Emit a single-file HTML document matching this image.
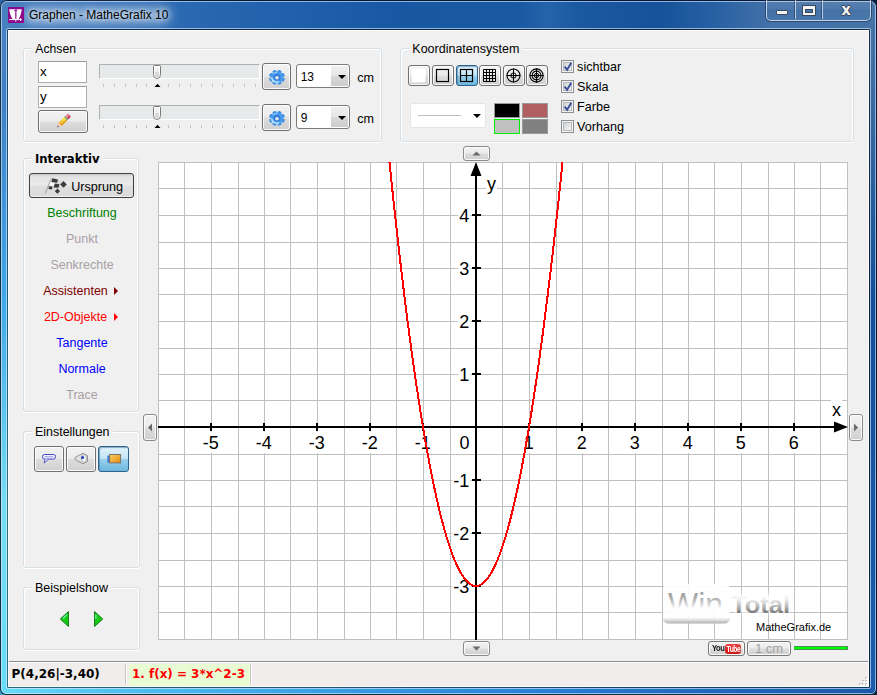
<!DOCTYPE html>
<html lang="de"><head><meta charset="utf-8"><title>Graphen - MatheGrafix 10</title>
<style>
*{box-sizing:border-box;margin:0;padding:0}
html,body{width:877px;height:695px;overflow:hidden}
body{position:relative;font-family:"Liberation Sans",sans-serif;font-size:12.5px;color:#000;background:linear-gradient(90deg,#2f64a8 0,#2f64a8 50%,#0a1a3a 50%,#0a1a3a 100%) 0 0/100% 50% no-repeat,linear-gradient(90deg,#3a9cc4 0,#3a9cc4 50%,#0c1c3c 50%,#0c1c3c 100%) 0 100%/100% 50% no-repeat}
.abs,.abs>*{position:absolute}
#frame{left:0;top:0;width:877px;height:695px;overflow:hidden;border-radius:7px 7px 6px 6px;
 background:
  linear-gradient(90deg,#68dcf8 0,#52c2f2 100px,#3aa2e6 300px,#2a86da 500px,#2068c0 700px,#1c58a8 100%) 0 687px/877px 8px no-repeat,
  linear-gradient(180deg,#4a80c0 0,#4080c8 100px,#40a8e8 300px,#74dcf2 500px,#68dcf8 695px) 0 0/8px 695px no-repeat,
  linear-gradient(180deg,#4875a8 0,#3a6aa0 100px,#124f98 300px,#1c5cac 695px) 869px 0/8px 695px no-repeat,
  linear-gradient(90deg,#4a80c0 0,#3f78bc 40px,#2b6ab2 180px,#2362ac 260px,#1858a2 400px,#1a5aa2 520px,#2563aa 548px,#1a589f 580px,#16529a 660px,#2a62a4 720px,#4371a8 770px,#4674a8 100%) 0 0/877px 30px no-repeat,
  #1f5eae;
 box-shadow:inset 1px 0 0 #123244,inset 0 -1px 0 #123244,inset 0 0 0 1px #06183a}
#frame:before{content:"";position:absolute;left:1px;top:1px;right:1px;bottom:1px;border-radius:6px 6px 5px 5px;border:1px solid rgba(220,235,250,.62)}
#frame:after{content:"";box-sizing:border-box;position:absolute;left:6px;top:28px;width:865px;height:661px;border-radius:2px;border:1px solid rgba(220,240,255,.62)}
#inb{left:7px;top:29px;width:863px;height:659px;border:1px solid rgba(8,26,52,.82);border-left-color:rgba(10,40,50,.62);border-bottom-color:rgba(10,40,50,.62);border-radius:1px}
#client{left:8px;top:30px;width:861px;height:657px;background:#f0f0f0;border:1px solid #fdfcfb}
#title{left:29px;top:6px;font-size:12px;line-height:18px;white-space:nowrap;color:#000;text-shadow:0 0 5px rgba(255,255,255,.8),0 0 9px rgba(255,255,255,.6)}
#glow{left:24px;top:7px;width:146px;height:17px;border-radius:8px;background:rgba(255,255,255,.45);filter:blur(6px)}
.gb{border:1px solid #d5dfe5;border-radius:3px;box-shadow:inset 1px 1px 0 #fff,inset -1px 0 0 #fff,0 1px 0 #fff}
.gl{background:#f0f0f0;padding:0 3px;white-space:nowrap;line-height:15px;height:15px}
.btn{border:1px solid #707070;border-radius:3px;background:linear-gradient(180deg,#f2f2f2 0,#ebebeb 48%,#dddddd 52%,#cfcfcf 100%);box-shadow:inset 0 0 0 1px rgba(255,255,255,.85)}
.btn.on{border-color:#2c628b;background:linear-gradient(180deg,#e2f2fb 0,#c2e4f6 48%,#98d0ee 52%,#6cb7dd 100%);box-shadow:inset 1px 1px 1px rgba(60,110,150,.55)}
.tb{border:1px solid #abadb3;border-top-color:#9a9c9f;background:#fff;padding-left:1px;line-height:19px;font-size:13.5px}
.trk{background:#e7eaea;border:1px solid #fff;border-top-color:#b0b0b0;border-left-color:#b0b0b0}
.tick{width:1px;height:3px;background:#c3c3c3}
.cb{width:13px;height:13px;border:1px solid #8e8f8f;background:#f4f4f4;box-shadow:inset 0 0 0 1px #f4f4f4,inset 0 0 0 2px #b5b9bd}
.cb i{position:absolute;left:2px;top:2px;width:7px;height:7px;background:linear-gradient(135deg,#d0d3d6,#f5f5f5)}
.lbl{white-space:nowrap;line-height:15px}
.li{left:20px;width:106px;text-align:center;line-height:16px;white-space:nowrap}
.combo{border:1px solid #7b7b7b;border-radius:3px;background:#fff;overflow:hidden;box-shadow:inset 0 0 0 1px #fff}
.combo .dd{right:1px;top:1px;bottom:1px;width:17px;background:linear-gradient(180deg,#f0f0f0 0,#e6e6e6 48%,#d8d8d8 52%,#cdcdcd 100%)}
.arr{width:0;height:0;border-left:4px solid transparent;border-right:4px solid transparent;border-top:4px solid #000}
.bold{font-family:"DejaVu Sans",sans-serif;font-weight:bold}
</style></head><body>
<div id="frame" class="abs">
<div id="glow"></div>
<svg style="left:8px;top:7px" width="16" height="16" viewBox="0 0 16 16"><rect width="16" height="16" fill="#8b0a8b"/><path d="M1.2 2.2H13.8C13.3 6 12.3 9.5 10.6 12H8.3V3.2H7.3V12H4.6C2.8 9.5 1.7 6 1.2 2.2Z" fill="#fff"/><path d="M6.4 3.2H9.2" stroke="#8b0a8b" stroke-width="1"/><path d="M7.8 2.6V14.6M1.2 12.6H13.8M12.6 11.2V14" stroke="#fff" stroke-width="1"/><path d="M7.8 2.6V11.6" stroke="#8b0a8b" stroke-width="1"/><path d="M6.6 3.4H9" stroke="#8b0a8b" stroke-width=".9"/></svg>
<div id="title">Graphen - MatheGrafix 10</div>
<div class="abs" style="left:766px;top:0;width:105px;height:21px;border:1px solid rgba(235,242,250,.75);border-top:0;border-radius:0 0 5px 5px;background:linear-gradient(180deg,rgba(255,255,255,.10),rgba(255,255,255,.05) 45%,rgba(255,255,255,0) 50%,rgba(255,255,255,.03));box-shadow:0 0 0 1px rgba(20,40,80,.55)">
<div style="left:28px;top:0;width:1px;height:19px;background:rgba(235,242,250,.7);box-shadow:-1px 0 0 rgba(20,40,80,.45)"></div>
<div style="left:55px;top:0;width:1px;height:19px;background:rgba(235,242,250,.7);box-shadow:-1px 0 0 rgba(20,40,80,.45)"></div>
<div style="left:9px;top:10px;width:12px;height:5px;background:#f4f4f4;border:1px solid #3a4a60;border-radius:1px"></div>
<div style="left:36px;top:6px;width:12px;height:9px;border:2px solid #f4f4f4;border-top-width:3px;outline:1px solid #3a4a60;box-shadow:inset 0 0 0 1px #3a4a60"></div>
<div style="left:66px;top:2px;width:26px;text-align:center;font:bold 15px/17px 'DejaVu Sans',sans-serif;color:#f4f4f4;text-shadow:0 0 1px #223,1px 0 0 #3a4a60,-1px 0 0 #3a4a60,0 1px 0 #3a4a60,0 -1px 0 #3a4a60">x</div>
</div>
<div id="inb"></div><div id="client" class="abs">
<div class="gb" style="left:14px;top:17px;width:359px;height:94px"></div><div class="gl" style="left:23.299999999999997px;top:11px;font-size:12.2px">Achsen</div>
<div class="gb" style="left:391px;top:17px;width:454px;height:94px"></div><div class="gl" style="left:400.3px;top:11px">Koordinatensystem</div>
<div class="gb" style="left:14px;top:127px;width:116px;height:254px"></div><div class="gl bold" style="left:23px;top:121px;font-size:11.65px">Interaktiv</div>
<div class="gb" style="left:14px;top:400px;width:117px;height:137px"></div><div class="gl" style="left:23.1px;top:394px;font-size:12.4px">Einstellungen</div>
<div class="gb" style="left:14px;top:556px;width:117px;height:63px"></div><div class="gl" style="left:23px;top:550px">Beispielshow</div>
<div class="tb" style="left:29px;top:30px;width:49px;height:22px">x</div><div class="tb" style="left:29px;top:55px;width:49px;height:22px">y</div><div class="btn" style="left:29px;top:79px;width:50px;height:23px"></div><svg style="left:46px;top:81px" width="18" height="18" viewBox="0 0 18 18"><defs><linearGradient id="pg" x1="0" y1="0" x2="1" y2="0"><stop offset="0" stop-color="#f8a828"/><stop offset="1" stop-color="#f4f040"/></linearGradient></defs><g transform="translate(2.2 15.2) rotate(-45)"><path d="M0 0L4.2 -2.2V2.2Z" fill="#f0c8a8"/><path d="M0 0L1.6 -0.9V0.9Z" fill="#503050"/><rect x="4.2" y="-2.2" width="7.6" height="4.4" fill="url(#pg)"/><rect x="4.2" y="0.8" width="7.6" height="1.4" fill="#e08818" opacity=".8"/><rect x="11.8" y="-2.2" width="1.8" height="4.4" fill="#88a070"/><path d="M13.6 -2.2H16.2Q17.6 -2.2 17.6 0Q17.6 2.2 16.2 2.2H13.6Z" fill="#e88898"/><path d="M13.6 0.6H17.4Q17.2 2.2 16.2 2.2H13.6Z" fill="#c83050"/></g></svg>
<div class="trk" style="left:90px;top:33px;width:161px;height:15px"></div><svg style="left:143px;top:33px" width="11" height="17" viewBox="0 0 11 17"><defs><linearGradient id="tg64" x1="0" y1="0" x2="0" y2="1"><stop offset="0" stop-color="#f6f6f6"/><stop offset=".5" stop-color="#ececec"/><stop offset=".55" stop-color="#dcdcdc"/><stop offset="1" stop-color="#cfcfcf"/></linearGradient></defs><path d="M1.5 2.5Q1.5 1.5 2.5 1.5H7.5Q8.5 1.5 8.5 2.5V10.5Q8.5 14.5 5 14.5Q1.5 14.5 1.5 10.5Z" fill="#fff" stroke="#7a7a7a" stroke-width="1"/><path d="M3 3H7V10.5Q7 13 5 13Q3 13 3 10.5Z" fill="url(#tg64)"/></svg><div class="tick" style="left:94px;top:53px"></div><div class="tick" style="left:105px;top:53px"></div><div class="tick" style="left:116px;top:53px"></div><div class="tick" style="left:127px;top:53px"></div><div class="tick" style="left:137px;top:53px"></div><svg style="left:145px;top:52px" width="8" height="5" viewBox="0 0 8 5"><path d="M0.5 4L3.5 0.8L6.5 4Z" fill="#000"/></svg><div class="tick" style="left:159px;top:53px"></div><div class="tick" style="left:170px;top:53px"></div><div class="tick" style="left:181px;top:53px"></div><div class="tick" style="left:192px;top:53px"></div><div class="tick" style="left:203px;top:53px"></div><div class="tick" style="left:213px;top:53px"></div><div class="tick" style="left:224px;top:53px"></div><div class="tick" style="left:235px;top:53px"></div><div class="tick" style="left:246px;top:53px"></div>
<div class="trk" style="left:90px;top:74px;width:161px;height:15px"></div><svg style="left:143px;top:74px" width="11" height="17" viewBox="0 0 11 17"><defs><linearGradient id="tg105" x1="0" y1="0" x2="0" y2="1"><stop offset="0" stop-color="#f6f6f6"/><stop offset=".5" stop-color="#ececec"/><stop offset=".55" stop-color="#dcdcdc"/><stop offset="1" stop-color="#cfcfcf"/></linearGradient></defs><path d="M1.5 2.5Q1.5 1.5 2.5 1.5H7.5Q8.5 1.5 8.5 2.5V10.5Q8.5 14.5 5 14.5Q1.5 14.5 1.5 10.5Z" fill="#fff" stroke="#7a7a7a" stroke-width="1"/><path d="M3 3H7V10.5Q7 13 5 13Q3 13 3 10.5Z" fill="url(#tg105)"/></svg><div class="tick" style="left:94px;top:94px"></div><div class="tick" style="left:105px;top:94px"></div><div class="tick" style="left:116px;top:94px"></div><div class="tick" style="left:127px;top:94px"></div><div class="tick" style="left:137px;top:94px"></div><svg style="left:145px;top:93px" width="8" height="5" viewBox="0 0 8 5"><path d="M0.5 4L3.5 0.8L6.5 4Z" fill="#000"/></svg><div class="tick" style="left:159px;top:94px"></div><div class="tick" style="left:170px;top:94px"></div><div class="tick" style="left:181px;top:94px"></div><div class="tick" style="left:192px;top:94px"></div><div class="tick" style="left:203px;top:94px"></div><div class="tick" style="left:213px;top:94px"></div><div class="tick" style="left:224px;top:94px"></div><div class="tick" style="left:235px;top:94px"></div><div class="tick" style="left:246px;top:94px"></div>
<div class="btn" style="left:253px;top:32px;width:29px;height:27px"></div><svg style="left:259px;top:38px" width="18" height="16" viewBox="-9 -8 18 16"><g transform="translate(0 .3) scale(1 .94)"><g fill="#3f90e4"><rect x="-2" y="-8" width="4" height="5" rx="1.1" transform="rotate(22.5)"/><rect x="-2" y="-8" width="4" height="5" rx="1.1" transform="rotate(67.5)"/><rect x="-2" y="-8" width="4" height="5" rx="1.1" transform="rotate(112.5)"/><rect x="-2" y="-8" width="4" height="5" rx="1.1" transform="rotate(157.5)"/><rect x="-2" y="-8" width="4" height="5" rx="1.1" transform="rotate(202.5)"/><rect x="-2" y="-8" width="4" height="5" rx="1.1" transform="rotate(247.5)"/><rect x="-2" y="-8" width="4" height="5" rx="1.1" transform="rotate(292.5)"/><rect x="-2" y="-8" width="4" height="5" rx="1.1" transform="rotate(337.5)"/></g><circle r="6" fill="#4a9cec"/><circle r="3.4" fill="#2f7cd8"/><path d="M-5.2 1.2A5.2 5.2 0 0 0 1.5 5" stroke="#b8e0ff" stroke-width="1.8" fill="none" stroke-linecap="round"/><path d="M-3.6 -3.8A5 5 0 0 1 0 -5.2" stroke="#8cc8fa" stroke-width="1.2" fill="none"/><circle cx="0" cy=".4" r="1.9" fill="#e2e6ea"/></g></svg><div class="combo abs" style="left:287px;top:33px;width:54px;height:24px"><div style="left:3.7px;top:4px;line-height:17px;font-size:12px">13</div><div class="dd"></div><div class="arr" style="left:41px;top:10px"></div></div><div class="lbl" style="left:348.3px;top:40px;font-size:12.6px">cm</div>
<div class="btn" style="left:253px;top:73px;width:29px;height:27px"></div><svg style="left:259px;top:79px" width="18" height="16" viewBox="-9 -8 18 16"><g transform="translate(0 .3) scale(1 .94)"><g fill="#3f90e4"><rect x="-2" y="-8" width="4" height="5" rx="1.1" transform="rotate(22.5)"/><rect x="-2" y="-8" width="4" height="5" rx="1.1" transform="rotate(67.5)"/><rect x="-2" y="-8" width="4" height="5" rx="1.1" transform="rotate(112.5)"/><rect x="-2" y="-8" width="4" height="5" rx="1.1" transform="rotate(157.5)"/><rect x="-2" y="-8" width="4" height="5" rx="1.1" transform="rotate(202.5)"/><rect x="-2" y="-8" width="4" height="5" rx="1.1" transform="rotate(247.5)"/><rect x="-2" y="-8" width="4" height="5" rx="1.1" transform="rotate(292.5)"/><rect x="-2" y="-8" width="4" height="5" rx="1.1" transform="rotate(337.5)"/></g><circle r="6" fill="#4a9cec"/><circle r="3.4" fill="#2f7cd8"/><path d="M-5.2 1.2A5.2 5.2 0 0 0 1.5 5" stroke="#b8e0ff" stroke-width="1.8" fill="none" stroke-linecap="round"/><path d="M-3.6 -3.8A5 5 0 0 1 0 -5.2" stroke="#8cc8fa" stroke-width="1.2" fill="none"/><circle cx="0" cy=".4" r="1.9" fill="#e2e6ea"/></g></svg><div class="combo abs" style="left:287px;top:74px;width:54px;height:24px"><div style="left:3.7px;top:4px;line-height:17px;font-size:12px">9</div><div class="dd"></div><div class="arr" style="left:41px;top:10px"></div></div><div class="lbl" style="left:348.3px;top:81px;font-size:12.6px">cm</div>
<div class="btn" style="left:399px;top:34px;width:22px;height:21px"></div><svg style="left:399px;top:34px" width="22" height="21" viewBox="0 0 22 21"><rect x="3.5" y="3.5" width="14" height="14" fill="#fff" stroke="none"/></svg><div class="btn" style="left:423px;top:34px;width:22px;height:21px"></div><svg style="left:423px;top:34px" width="22" height="21" viewBox="0 0 22 21"><rect x="4.5" y="4.5" width="12" height="12" fill="none" stroke="#000" stroke-width="1.15"/></svg><div class="btn on" style="left:447px;top:34px;width:22px;height:21px"></div><svg style="left:447px;top:34px" width="22" height="21" viewBox="0 0 22 21"><rect x="4.5" y="4.5" width="12" height="12" fill="none" stroke="#000" stroke-width="1.15"/><path d="M10.5 4.5V16.5M4.5 10.5H16.5" stroke="#000" stroke-width="1.15"/></svg><div class="btn" style="left:470px;top:34px;width:22px;height:21px"></div><svg style="left:470px;top:34px" width="22" height="21" viewBox="0 0 22 21"><path d="M4.5 4.5H16.5V16.5H4.5ZM7.5 4.5V16.5M10.5 4.5V16.5M13.5 4.5V16.5M4.5 7.5H16.5M4.5 10.5H16.5M4.5 13.5H16.5" fill="none" stroke="#000" stroke-width="1"/></svg><div class="btn" style="left:494px;top:34px;width:22px;height:21px"></div><svg style="left:494px;top:34px" width="22" height="21" viewBox="0 0 22 21"><circle cx="10.5" cy="10.5" r="6.5" fill="none" stroke="#000" stroke-width="1.1"/><circle cx="10.5" cy="10.5" r="2.6" fill="none" stroke="#000" stroke-width="1"/><path d="M10.5 3.5V17.5M3.5 10.5H17.5" stroke="#000" stroke-width="1"/></svg><div class="btn" style="left:517px;top:34px;width:22px;height:21px"></div><svg style="left:517px;top:34px" width="22" height="21" viewBox="0 0 22 21"><circle cx="10.5" cy="10.5" r="6.6" fill="none" stroke="#000" stroke-width="1.1"/><circle cx="10.5" cy="10.5" r="4.4" fill="none" stroke="#000" stroke-width="1.1"/><circle cx="10.5" cy="10.5" r="2.2" fill="none" stroke="#000" stroke-width="1"/><path d="M10.5 3.5V17.5M3.5 10.5H17.5" stroke="#000" stroke-width="1"/></svg>
<div class="abs" style="left:401px;top:72px;width:76px;height:25px;background:#fff;border:1px solid #e2e6ea;border-radius:2px"><div style="left:7px;top:11px;width:43px;height:1px;background:#c0c0c0"></div><div class="arr" style="left:62px;top:10px"></div></div><div style="left:485px;top:72px;width:26px;height:15px;background:#000;border:1px solid #9a9a9a"></div><div style="left:513px;top:72px;width:26px;height:15px;background:#b06060;border:1px solid #9a9a9a"></div><div style="left:485px;top:88px;width:26px;height:15px;background:#c0c0c0;border:1px solid #00ee00"></div><div style="left:513px;top:88px;width:26px;height:15px;background:#808080;border:1px solid #9a9a9a"></div>
<div class="cb abs" style="left:552px;top:29px"><i></i><svg style="left:1px;top:1px" width="11" height="11" viewBox="0 0 11 11"><path d="M1.6 4.6L4.1 7.8L8.3 0.8" fill="none" stroke="#3a4f9a" stroke-width="1.9"/></svg></div><div class="lbl" style="left:568.1px;top:29px;font-size:12.6px">sichtbar</div>
<div class="cb abs" style="left:552px;top:49px"><i></i><svg style="left:1px;top:1px" width="11" height="11" viewBox="0 0 11 11"><path d="M1.6 4.6L4.1 7.8L8.3 0.8" fill="none" stroke="#3a4f9a" stroke-width="1.9"/></svg></div><div class="lbl" style="left:568.1px;top:49px;font-size:12.6px">Skala</div>
<div class="cb abs" style="left:552px;top:69px"><i></i><svg style="left:1px;top:1px" width="11" height="11" viewBox="0 0 11 11"><path d="M1.6 4.6L4.1 7.8L8.3 0.8" fill="none" stroke="#3a4f9a" stroke-width="1.9"/></svg></div><div class="lbl" style="left:568.1px;top:69px;font-size:12.6px">Farbe</div>
<div class="cb abs" style="left:552px;top:89px"><i></i></div><div class="lbl" style="left:568.1px;top:89px;font-size:12.6px">Vorhang</div>
<div class="btn" style="left:20px;top:142px;width:105px;height:25px;border-color:#404040;background:linear-gradient(180deg,#cdcdcd 0,#e4e4e4 3px,#eaeaea 48%,#dfdfdf 52%,#dadada 100%);box-shadow:inset 0 -1px 0 rgba(255,255,255,.6)"></div><svg style="left:35px;top:143px" width="24" height="22" viewBox="0 0 24 22"><path d="M7.6 3.8L1.2 19.5" stroke="#a4aca4" stroke-width="1.1"/><path d="M7.4 4L14 5.4L19.5 7L22.8 10.4L16 17L13.4 19.8L4.5 15Z" fill="#dcdcdc"/><g fill="#3c3c3c"><path d="M8.3 4.2L13.9 5.4L13.2 8.8L7.4 8Z"/><path d="M10.6 9.5L15.4 10.2L14.6 13.8L9.6 13.4Z"/><path d="M19.5 7.1L22.8 10.4L19.5 13.7L16.2 10.4Z"/><path d="M13.4 14.6L16 17.2L13.4 19.8L10.8 17.2Z"/><path d="M4.9 12.2L8.5 12.6L8 15.5L4.5 15Z"/></g><path d="M6.3 8.8L10.6 9.3L9.8 12L5.8 11.6Z" fill="#fff"/></svg><div class="lbl" style="left:62.2px;top:149px;font-size:12.6px">Ursprung</div>
<div class="li" style="top:173.5px;color:#008000">Beschriftung</div><div class="li" style="top:199.5px;color:#a8a0a4">Punkt</div><div class="li" style="top:225.5px;color:#a8a0a4">Senkrechte</div><div class="li" style="top:251.5px;color:#800000;left:18.5px">Assistenten<span style="display:inline-block;width:0;height:0;border-top:4px solid transparent;border-bottom:4px solid transparent;border-left:4px solid #800000;margin-left:6px;vertical-align:-0.5px;position:relative;left:0.5px"></span></div><div class="li" style="top:277.5px;color:#ff0000;left:18.5px">2D-Objekte<span style="display:inline-block;width:0;height:0;border-top:4px solid transparent;border-bottom:4px solid transparent;border-left:4px solid #ff0000;margin-left:6px;vertical-align:-0.5px;position:relative;left:0.5px"></span></div><div class="li" style="top:303.5px;color:#0000ff">Tangente</div><div class="li" style="top:329.5px;color:#0000ff">Normale</div><div class="li" style="top:355.5px;color:#a8a0a4">Trace</div>
<div class="btn" style="left:25px;top:415px;width:30px;height:26px"></div><div class="btn" style="left:57px;top:415px;width:30px;height:26px"></div><div class="btn on" style="left:89px;top:415px;width:31px;height:26px"></div><svg style="left:32px;top:421px" width="17" height="14" viewBox="0 0 17 14"><rect x="1.5" y="2.5" width="13" height="4.6" rx="2" fill="#eef0ff" stroke="#4848c8" stroke-width="1"/><path d="M4 7.2L3.2 11L7.5 7.2" fill="#eef0ff" stroke="#4848c8" stroke-width=".9"/><path d="M3.5 4.8H12.5" stroke="#9a9ae0" stroke-width="1"/></svg>
<svg style="left:64px;top:420px" width="17" height="15" viewBox="0 0 17 15"><path d="M2 6.5L10 2.2L14.5 4.5V10.5L10 12.8L2 8.5Z" fill="#e2e2e2" stroke="#8c8c8c" stroke-width=".9"/><ellipse cx="11" cy="7.5" rx="2.6" ry="4" fill="#f6f6f6" stroke="#9a9a9a" stroke-width=".8"/><circle cx="9.6" cy="6.4" r="1.5" fill="#2038c0"/></svg>
<svg style="left:96px;top:421px" width="18" height="14" viewBox="0 0 18 14"><defs><linearGradient id="og" x1="0" y1="0" x2="1" y2="1"><stop offset="0" stop-color="#f8d060"/><stop offset="1" stop-color="#e88a10"/></linearGradient></defs><rect x="2.4" y="3.6" width="2.2" height="7" fill="#3a78d8"/><rect x="4.6" y="2.5" width="11" height="8.4" fill="url(#og)" stroke="#7a7466" stroke-width="1"/></svg>
<svg style="left:50px;top:579px" width="12" height="18" viewBox="0 0 12 18"><path d="M9.4 1.6V16.4L1.3 9Z" fill="#16cc16" stroke="#0c740c" stroke-width="1" stroke-linejoin="round"/><path d="M8.2 4.6L4 8.4" stroke="#6ef0a0" stroke-width="1.3"/></svg>
<svg style="left:84px;top:579px" width="12" height="18" viewBox="0 0 12 18"><path d="M1.6 1.6V16.4L9.7 9Z" fill="#16cc16" stroke="#0c740c" stroke-width="1" stroke-linejoin="round"/><path d="M2.8 4.6L2.8 9" stroke="#6ef0a0" stroke-width="1.3"/></svg>
<div class="btn" style="left:454px;top:115px;width:27px;height:15px;border-color:#8a8a8a"></div><svg style="left:454px;top:115px" width="27" height="15"><path transform="translate(13.5 7.5)" d="M-4 2L0 -2L4 2Z" fill="#6a6a6a"/></svg><div class="btn" style="left:454px;top:610px;width:27px;height:15px;border-color:#8a8a8a"></div><svg style="left:454px;top:610px" width="27" height="15"><path transform="translate(13.5 7.5)" d="M-4 -2L0 2L4 -2Z" fill="#6a6a6a"/></svg><div class="btn" style="left:134px;top:383px;width:14px;height:27px;border-color:#8a8a8a"></div><svg style="left:134px;top:383px" width="14" height="27"><path transform="translate(7.0 13.5)" d="M2 -4L-2 0L2 4Z" fill="#6a6a6a"/></svg><div class="btn" style="left:840px;top:383px;width:14px;height:27px;border-color:#8a8a8a"></div><svg style="left:840px;top:383px" width="14" height="27"><path transform="translate(7.0 13.5)" d="M-2 -4L2 0L-2 4Z" fill="#6a6a6a"/></svg>
<svg style="left:149px;top:131px" width="690" height="478" viewBox="158 162 690 478" font-family="Liberation Sans, sans-serif"><rect x="158" y="162" width="690" height="478" fill="#fff"/><path d="M158.5 162V640M184.5 162V640M211.5 162V640M238.5 162V640M264.5 162V640M290.5 162V640M317.5 162V640M344.5 162V640M370.5 162V640M396.5 162V640M423.5 162V640M450.5 162V640M476.5 162V640M502.5 162V640M529.5 162V640M556.5 162V640M582.5 162V640M608.5 162V640M635.5 162V640M662.5 162V640M688.5 162V640M714.5 162V640M741.5 162V640M768.5 162V640M794.5 162V640M820.5 162V640M847.5 162V640M158 162.5H848M158 188.5H848M158 215.5H848M158 242.5H848M158 268.5H848M158 294.5H848M158 321.5H848M158 348.5H848M158 374.5H848M158 400.5H848M158 427.5H848M158 454.5H848M158 480.5H848M158 506.5H848M158 533.5H848M158 560.5H848M158 586.5H848M158 612.5H848M158 639.5H848" stroke="#c0c0c0" stroke-width="1" fill="none" shape-rendering="crispEdges"/><defs><linearGradient id="wg1" x1="0" y1="0" x2="0" y2="1"><stop offset="0" stop-color="#9a9a9a"/><stop offset=".3" stop-color="#a8a8a8"/><stop offset=".5" stop-color="#d8d8d8"/><stop offset=".62" stop-color="#fff"/><stop offset="1" stop-color="#fff"/></linearGradient><linearGradient id="wg2" x1="0" y1="0" x2="0" y2="1"><stop offset="0" stop-color="#fff"/><stop offset=".3" stop-color="#f2f2f2"/><stop offset=".48" stop-color="#d0d0d0"/><stop offset=".7" stop-color="#9c9c9c"/><stop offset=".8" stop-color="#7c7c7c"/><stop offset="1" stop-color="#7c7c7c"/></linearGradient><linearGradient id="wg3" x1="0" y1="0" x2="0" y2="1"><stop offset="0" stop-color="#fff" stop-opacity=".93"/><stop offset=".84" stop-color="#fff" stop-opacity=".93"/><stop offset=".9" stop-color="#e4e4e4"/><stop offset="1" stop-color="#b0b0b0"/></linearGradient><filter id="wb" x="-20%" y="-40%" width="140%" height="180%"><feGaussianBlur stdDeviation="2.2"/></filter></defs>
<g><rect x="663" y="584" width="67" height="39.5" rx="5" fill="url(#wg3)"/>
<rect x="734" y="594" width="56" height="19" fill="#fff" fill-opacity=".85" filter="url(#wb)"/>
<text x="668" y="614.7" font-size="31" fill="url(#wg1)" textLength="55" lengthAdjust="spacingAndGlyphs">Win</text>
<text x="731" y="612.5" font-size="24.7" font-weight="bold" fill="url(#wg2)" textLength="59" lengthAdjust="spacingAndGlyphs">Total</text></g><g fill="#fff"><rect x="201.7" y="431.6" width="18.0" height="21.4"/><rect x="254.7" y="431.6" width="18.0" height="21.4"/><rect x="307.7" y="431.6" width="18.0" height="21.4"/><rect x="360.7" y="431.6" width="18.0" height="21.4"/><rect x="413.7" y="431.6" width="18.0" height="21.4"/><rect x="522.7" y="431.6" width="12.0" height="21.4"/><rect x="575.7" y="431.6" width="12.0" height="21.4"/><rect x="628.7" y="431.6" width="12.0" height="21.4"/><rect x="681.7" y="431.6" width="12.0" height="21.4"/><rect x="734.7" y="431.6" width="12.0" height="21.4"/><rect x="787.7" y="431.6" width="12.0" height="21.4"/><rect x="458.5" y="431.6" width="12.0" height="21.4"/><rect x="452.3" y="575.7" width="18.0" height="21.4"/><rect x="452.3" y="522.7" width="18.0" height="21.4"/><rect x="452.3" y="469.7" width="18.0" height="21.4"/><rect x="458.3" y="363.7" width="12.0" height="21.4"/><rect x="458.3" y="310.7" width="12.0" height="21.4"/><rect x="458.3" y="257.7" width="12.0" height="21.4"/><rect x="458.3" y="204.7" width="12.0" height="21.4"/><rect x="486.0" y="171.8" width="11.0" height="21.4"/><rect x="831.0" y="398.3" width="11.0" height="21.4"/></g><g font-size="18" fill="#000"><text x="202.7" y="449.3">-5</text><text x="255.7" y="449.3">-4</text><text x="308.7" y="449.3">-3</text><text x="361.7" y="449.3">-2</text><text x="414.7" y="449.3">-1</text><text x="523.7" y="449.3">1</text><text x="576.7" y="449.3">2</text><text x="629.7" y="449.3">3</text><text x="682.7" y="449.3">4</text><text x="735.7" y="449.3">5</text><text x="788.7" y="449.3">6</text><text x="459.5" y="449.3">0</text><text x="453.3" y="593.4">-3</text><text x="453.3" y="540.4">-2</text><text x="453.3" y="487.4">-1</text><text x="459.3" y="381.4">1</text><text x="459.3" y="328.4">2</text><text x="459.3" y="275.4">3</text><text x="459.3" y="222.4">4</text><text x="487.0" y="189.5">y</text><text x="832.0" y="416.0">x</text></g><path d="M158 427H839M476 640V170" stroke="#000" stroke-width="2" fill="none" shape-rendering="crispEdges"/><path d="M476 162L470.5 176H481.5Z M848 427L834 421.5V432.5Z" fill="#000"/><path d="M211 423V431M264 423V431M317 423V431M370 423V431M423 423V431M529 423V431M582 423V431M635 423V431M688 423V431M741 423V431M794 423V431M472 586H481M472 533H481M472 480H481M472 374H481M472 321H481M472 268H481M472 215H481" stroke="#000" stroke-width="2" shape-rendering="crispEdges"/><polyline points="385.90,126.49 386.96,137.24 388.02,147.86 389.08,158.35 390.14,168.72 391.20,178.96 392.26,189.07 393.32,199.06 394.38,208.92 395.44,218.65 396.50,228.25 397.56,237.73 398.62,247.08 399.68,256.30 400.74,265.39 401.80,274.36 402.86,283.20 403.92,291.91 404.98,300.50 406.04,308.96 407.10,317.29 408.16,325.49 409.22,333.57 410.28,341.52 411.34,349.34 412.40,357.04 413.46,364.61 414.52,372.05 415.58,379.36 416.64,386.55 417.70,393.61 418.76,400.54 419.82,407.35 420.88,414.03 421.94,420.58 423.00,427.00 424.06,433.30 425.12,439.47 426.18,445.51 427.24,451.42 428.30,457.21 429.36,462.87 430.42,468.40 431.48,473.81 432.54,479.09 433.60,484.24 434.66,489.26 435.72,494.16 436.78,498.93 437.84,503.57 438.90,508.09 439.96,512.48 441.02,516.74 442.08,520.87 443.14,524.88 444.20,528.76 445.26,532.51 446.32,536.14 447.38,539.64 448.44,543.01 449.50,546.25 450.56,549.37 451.62,552.36 452.68,555.22 453.74,557.95 454.80,560.56 455.86,563.04 456.92,565.39 457.98,567.62 459.04,569.72 460.10,571.69 461.16,573.53 462.22,575.25 463.28,576.84 464.34,578.30 465.40,579.64 466.46,580.85 467.52,581.93 468.58,582.88 469.64,583.71 470.70,584.41 471.76,584.98 472.82,585.43 473.88,585.75 474.94,585.94 476.00,586.00 477.06,585.94 478.12,585.75 479.18,585.43 480.24,584.98 481.30,584.41 482.36,583.71 483.42,582.88 484.48,581.93 485.54,580.85 486.60,579.64 487.66,578.30 488.72,576.84 489.78,575.25 490.84,573.53 491.90,571.69 492.96,569.72 494.02,567.62 495.08,565.39 496.14,563.04 497.20,560.56 498.26,557.95 499.32,555.22 500.38,552.36 501.44,549.37 502.50,546.25 503.56,543.01 504.62,539.64 505.68,536.14 506.74,532.51 507.80,528.76 508.86,524.88 509.92,520.87 510.98,516.74 512.04,512.48 513.10,508.09 514.16,503.57 515.22,498.93 516.28,494.16 517.34,489.26 518.40,484.24 519.46,479.09 520.52,473.81 521.58,468.40 522.64,462.87 523.70,457.21 524.76,451.42 525.82,445.51 526.88,439.47 527.94,433.30 529.00,427.00 530.06,420.58 531.12,414.03 532.18,407.35 533.24,400.54 534.30,393.61 535.36,386.55 536.42,379.36 537.48,372.05 538.54,364.61 539.60,357.04 540.66,349.34 541.72,341.52 542.78,333.57 543.84,325.49 544.90,317.29 545.96,308.96 547.02,300.50 548.08,291.91 549.14,283.20 550.20,274.36 551.26,265.39 552.32,256.30 553.38,247.08 554.44,237.73 555.50,228.25 556.56,218.65 557.62,208.92 558.68,199.06 559.74,189.07 560.80,178.96 561.86,168.72 562.92,158.35 563.98,147.86 565.04,137.24 566.10,126.49" fill="none" stroke="#ff0000" stroke-width="2" shape-rendering="crispEdges"/><text x="756" y="630.6" font-size="11" fill="#000">MatheGrafix.de</text></svg>
<div class="btn" style="left:699px;top:610px;width:37px;height:15px;border-color:#777"></div><div style="left:702.5px;top:612px;font:bold 9px/11px 'Liberation Sans',sans-serif;letter-spacing:-.6px;color:#111;transform:scaleX(.85);transform-origin:0 0">You</div><div style="left:716px;top:612.5px;width:16px;height:10px;border-radius:3px;background:linear-gradient(180deg,#f04040,#c81818);display:flex;justify-content:center;overflow:hidden"><span style="position:static;flex:none;color:#fff;font:bold 9px/10px 'Liberation Sans',sans-serif;letter-spacing:-.5px;transform:scaleX(.74)">Tube</span></div><div class="btn" style="left:738px;top:610px;width:44px;height:15px;border-color:#777"></div><div style="left:738px;top:610px;width:44px;text-align:center;font-size:13px;line-height:15px;color:#a0a0a0">1 cm</div><div style="left:785px;top:615px;width:54px;height:4px;background:#00ff00;border:1px solid rgba(110,95,120,.7);border-width:1px 1px 1px 0;height:4px"></div>
<div style="left:0;top:630px;width:859px;height:1px;background:#8c8c8c"></div><div style="left:0;top:631px;width:859px;height:1px;background:#fff"></div><div style="left:0;top:632px;width:859px;height:23px;background:#f1edec"></div><div style="left:116px;top:633px;width:1px;height:21px;background:#c8c4c4;box-shadow:1px 0 0 #fff"></div><div style="left:120px;top:633px;width:121px;height:22px;background:#e9fbd2"></div><div style="left:241px;top:633px;width:1px;height:21px;background:#c8c4c4;box-shadow:1px 0 0 #fff"></div><div class="bold lbl" style="left:2.5px;top:635.5px;font-size:12px">P(4,26|-3,40)</div><div class="bold lbl" style="left:123px;top:635.5px;font-size:11.95px;color:#ff0000">1. f(x) = 3*x^2-3</div><div style="left:857px;top:653px;width:2px;height:2px;background:#fff;box-shadow:-1px -1px 0 #c4c0c0"></div><div style="left:854px;top:653px;width:2px;height:2px;background:#fff;box-shadow:-1px -1px 0 #c4c0c0"></div><div style="left:851px;top:653px;width:2px;height:2px;background:#fff;box-shadow:-1px -1px 0 #c4c0c0"></div><div style="left:857px;top:650px;width:2px;height:2px;background:#fff;box-shadow:-1px -1px 0 #c4c0c0"></div><div style="left:854px;top:650px;width:2px;height:2px;background:#fff;box-shadow:-1px -1px 0 #c4c0c0"></div><div style="left:857px;top:647px;width:2px;height:2px;background:#fff;box-shadow:-1px -1px 0 #c4c0c0"></div>
</div>
</div>
</body></html>
